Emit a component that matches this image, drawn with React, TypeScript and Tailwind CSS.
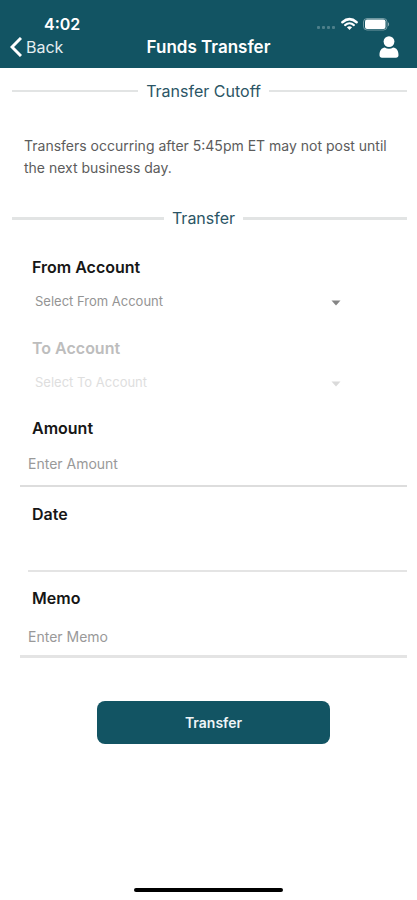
import React, { useState } from 'react';

interface SectionTitleProps {
  title: string;
  lineClass?: string;
}

interface AccountSelectProps {
  id: string;
  label: string;
  placeholder: string;
  value: string;
  onChange: (value: string) => void;
  disabled?: boolean;
}

function StatusIcons() {
  return (
    <div className="flex items-center">
      {/* No signal dots */}
      <svg className="w-5 h-3 mr-1 mt-2" viewBox="0 0 20 12" fill="#ffffff" fillOpacity="0.25">
        <rect x="0" y="4" width="3" height="3" rx="1" />
        <rect x="5" y="4" width="3" height="3" rx="1" />
        <rect x="10" y="4" width="3" height="3" rx="1" />
        <rect x="15" y="4" width="3" height="3" rx="1" />
      </svg>
      <svg className="w-[18px] h-[14px]" viewBox="0 0 18 14">
        <path d="M1.4 5.2C6 1.2 11 1.2 15.6 5.2" fill="none" stroke="#ffffff" strokeWidth="2.5" strokeLinecap="round" />
        <path d="M4.1 8.1C6.7 5.8 10.3 5.8 12.9 8.1" fill="none" stroke="#ffffff" strokeWidth="2.1" strokeLinecap="round" />
        <path d="M5.9 10.3C7.4 9 9.6 9 11.1 10.3L8.5 13Z" fill="#ffffff" />
      </svg>
      <svg className="w-7 h-[14px] ml-1" viewBox="0 0 28 14">
        <rect x="0.5" y="1.5" width="23.5" height="11.5" rx="3.5" fill="none" stroke="#ffffff" strokeOpacity="0.4" />
        <rect x="2" y="2.5" width="20.5" height="9.5" rx="2" fill="#ffffff" />
        <path d="M25 5.2c1.5.5 1.5 3.6 0 4.1z" fill="#ffffff" fillOpacity="0.5" />
      </svg>
    </div>
  );
}

function SectionTitle({ title, lineClass = 'h-[2px]' }: SectionTitleProps) {
  return (
    <div className="flex items-center gap-2 pl-3 pr-[10px]">
      <div className={`grow basis-0 bg-[#e2e4e4] ${lineClass}`} />
      <h2 className="text-[16px] leading-[22px] text-[#2b5565]">{title}</h2>
      <div className={`grow basis-3 bg-[#e2e4e4] ${lineClass}`} />
    </div>
  );
}

function AccountSelect({ id, label, placeholder, value, onChange, disabled }: AccountSelectProps) {
  return (
    <div className="flex flex-col">
      <label
        htmlFor={id}
        className={`pl-8 text-[16px] leading-6 font-semibold ${disabled ? 'text-[#bdbdbd]' : 'text-[#161616]'}`}
      >
        {label}
      </label>
      <div className="relative ml-[35px] mr-[76px]">
        <select
          id={id}
          value={value}
          disabled={disabled}
          onChange={(e) => onChange(e.target.value)}
          className={`w-full h-[46px] appearance-none bg-transparent text-[13px] outline-none opacity-100 ${disabled ? 'text-[#dedede]' : 'text-[#949494]'}`}
        >
          <option value="">{placeholder}</option>
        </select>
        <svg
          className={`absolute right-0 top-[21px] w-[10px] h-[6px] pointer-events-none ${disabled ? 'text-[#dadada]' : 'text-[#858585]'}`}
          viewBox="0 0 10 6"
        >
          <path d="M0.5 0.5h9L5 5.5z" fill="currentColor" />
        </svg>
      </div>
    </div>
  );
}

export default function App() {
  const [fromAccount, setFromAccount] = useState('');
  const [toAccount, setToAccount] = useState('');
  const [amount, setAmount] = useState('');
  const [date, setDate] = useState('');
  const [memo, setMemo] = useState('');

  const labelClass = 'pl-8 text-[16px] leading-6 font-semibold text-[#161616]';
  const inputClass = 'bg-transparent text-[14px] text-[#333333] placeholder:text-[#999999] placeholder:opacity-100 outline-none mr-[10px]';

  return (
    <div className="min-h-screen flex flex-col bg-white font-['Inter','Liberation_Sans',sans-serif]">
      {/* Header */}
      <header className="bg-[#125463] pt-3 pb-[10px] text-white">
        <div className="flex items-center justify-between h-6 pl-11 pr-[26px]">
          <span className="text-[16px] leading-6 font-semibold">4:02</span>
          <StatusIcons />
        </div>
        <div className="grid grid-cols-[1fr_auto_1fr] items-center h-[22px]">
          <button type="button" className="flex items-center gap-1 pl-[10px] text-[16px] leading-[22px] text-[#e4eef1]">
            <svg className="w-3 h-5" viewBox="0 0 12 20" fill="none" stroke="#ffffff" strokeWidth="3">
              <path d="M11 1L2 10l9 9" />
            </svg>
            Back
          </button>
          <h1 className="text-[17px] leading-[22px] font-semibold">Funds Transfer</h1>
          <button type="button" aria-label="Profile" className="justify-self-end mr-[18px]">
            <svg className="w-5 h-[22px]" viewBox="0 0 20 22" fill="#ffffff">
              <circle cx="10" cy="5.6" r="5.4" />
              <path d="M0.5 19.2C0.5 14.5 2.6 12 5.8 11.6c2.6 1.6 5.8 1.6 8.4 0 3.2.4 5.3 2.9 5.3 7.6 0 1.6-1 2.5-2.5 2.5H3c-1.5 0-2.5-.9-2.5-2.5z" />
            </svg>
          </button>
        </div>
      </header>

      <main className="flex-1 flex flex-col pt-3">
        <SectionTitle title="Transfer Cutoff" />
        <p className="mt-[33px] mb-7 pl-6 pr-4 text-[14px] leading-[22px] text-[#5c5c5c]">
          Transfers occurring after 5:45pm ET may not post until the next business day.
        </p>
        <SectionTitle title="Transfer" lineClass="h-[3px]" />

        <form className="flex flex-col mt-[26px]" onSubmit={(e) => e.preventDefault()}>
          <div className="flex flex-col gap-[11px]">
            <AccountSelect
              id="from-account"
              label="From Account"
              placeholder="Select From Account"
              value={fromAccount}
              onChange={setFromAccount}
            />
            <AccountSelect
              id="to-account"
              label="To Account"
              placeholder="Select To Account"
              value={toAccount}
              onChange={setToAccount}
              disabled={!fromAccount}
            />
          </div>

          <div className="flex flex-col mt-[10px]">
            <label htmlFor="amount" className={labelClass}>Amount</label>
            <input
              id="amount"
              value={amount}
              onChange={(e) => setAmount(e.target.value)}
              placeholder="Enter Amount"
              inputMode="decimal"
              className={`${inputClass} h-[47px] ml-5 pl-2 pt-[2px] border-b-2 border-[#dddddd]`}
            />
          </div>

          <div className="flex flex-col mt-[15px]">
            <label htmlFor="date" className={labelClass}>Date</label>
            <input
              id="date"
              value={date}
              onChange={(e) => setDate(e.target.value)}
              className={`${inputClass} h-[46px] ml-7 border-b-2 border-[#e4e4e4]`}
            />
          </div>

          <div className="flex flex-col mt-[14px]">
            <label htmlFor="memo" className={labelClass}>Memo</label>
            <input
              id="memo"
              value={memo}
              onChange={(e) => setMemo(e.target.value)}
              placeholder="Enter Memo"
              className={`${inputClass} h-12 ml-5 pl-2 pt-2 border-b-[3px] border-[#e4e4e4]`}
            />
          </div>

          <button
            type="submit"
            className="w-[56%] h-[43px] mt-[43px] ml-[10px] self-center rounded-lg bg-[#125463] text-[14px] font-semibold text-[#eef5f7]"
          >
            Transfer
          </button>
        </form>
      </main>

      {/* Home indicator */}
      <div className="w-[149px] h-1 mb-2 self-center rounded-full bg-black" />
    </div>
  );
}
